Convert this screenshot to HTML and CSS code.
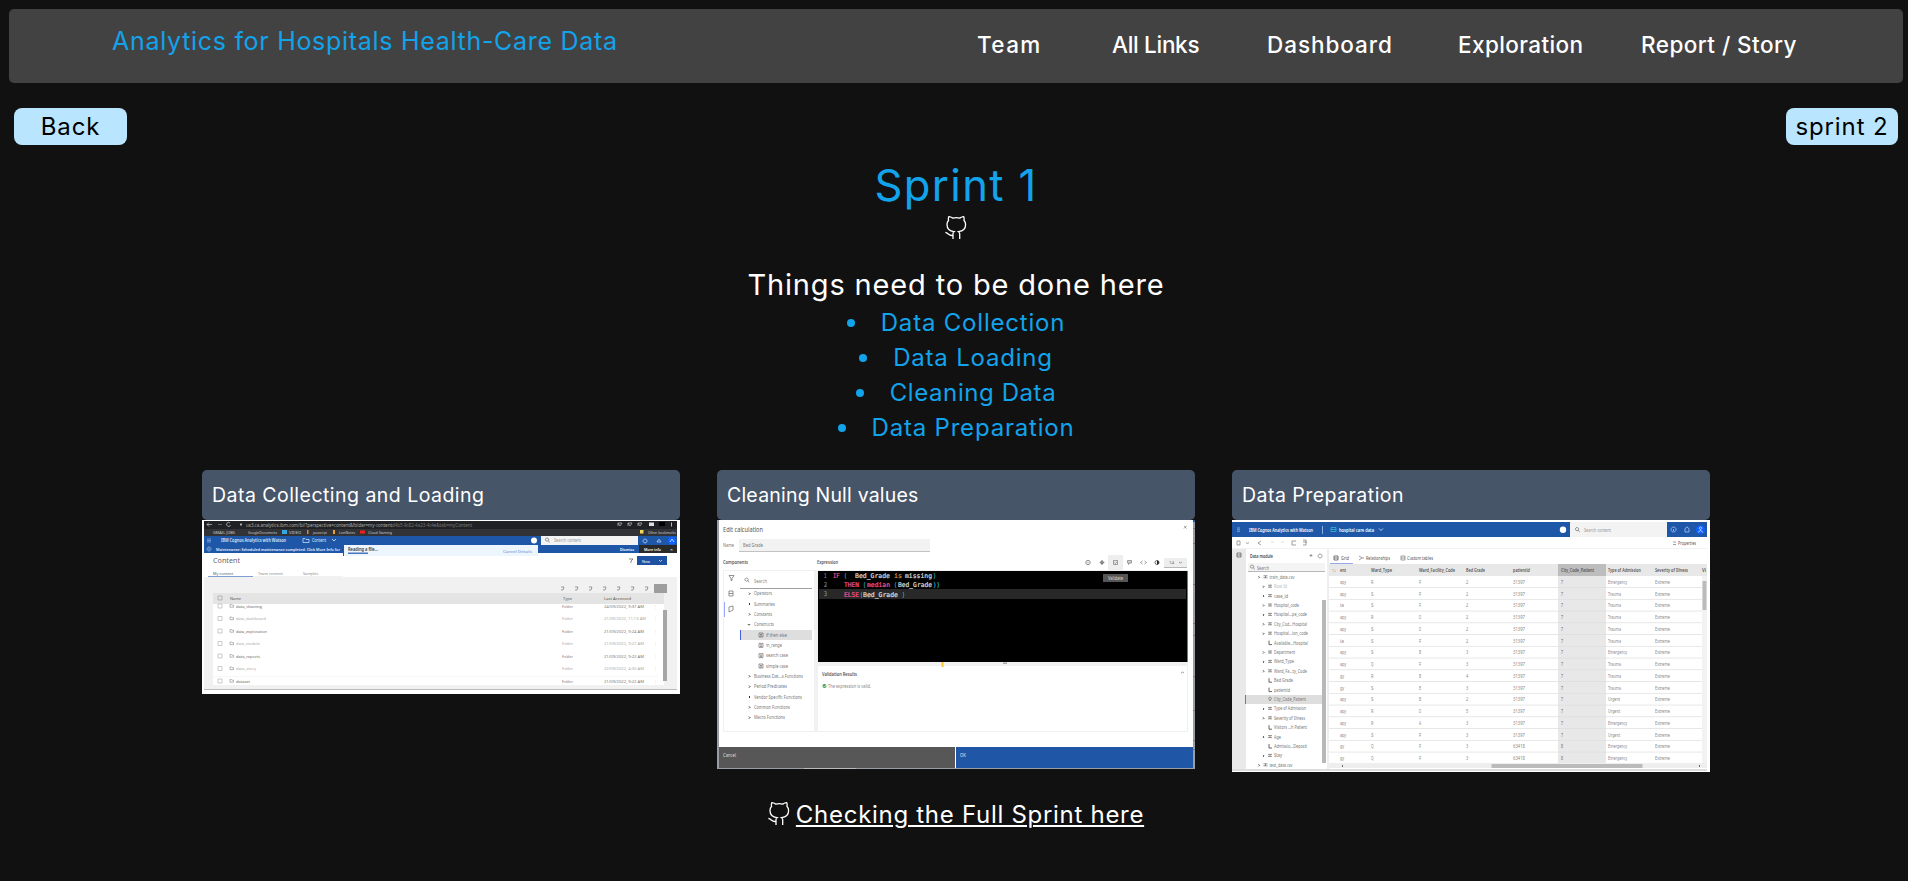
FILE: index.html
```html
<!DOCTYPE html>
<html lang="en">
<head>
<meta charset="utf-8">
<title>Analytics for Hospitals Health-Care Data</title>
<link rel="stylesheet" href="styles.css">
</head>
<body>
<header class="navbar">
  <a class="brand">Analytics for Hospitals Health-Care Data</a>
  <nav class="links"><a class="n1">Team</a><a class="n2">All Links</a><a class="n3">Dashboard</a><a class="n4">Exploration</a><a class="n5">Report / Story</a></nav>
</header>
<div class="pager"><a class="btn back">Back</a><a class="btn next">sprint 2</a></div>
<main>
  <h1><span>Sprint 1</span></h1>
  <svg class="git" viewBox="0 0 22 23"><path d="M8 23V17.8C8 16.8 8.2 16.2 9 15.7C4.9 15.2 2 12.8 2 8.6C2 6.8 2.6 5.3 3.6 4.2C3.2 3 3.3 1.8 3.8.7C5.2.6 6.7 1.4 7.8 2.1C10 1.6 12.5 1.6 14.7 2.1C15.8 1.4 17.3.6 18.7.7C19.2 1.8 19.3 3 18.9 4.2C20 5.3 20.6 6.8 20.6 8.6C20.6 12.8 17.6 15.2 13.6 15.7C14.4 16.2 14.7 16.8 14.7 17.8V23M8 19.4C3.4 20.2 3.5 16.5.4 16.5"/></svg>
  <h2><span>Things need to be done here</span></h2>
  <ul class="todo">
    <li class="t1"><span>Data Collection</span></li>
    <li class="t2"><span>Data Loading</span></li>
    <li class="t3"><span>Cleaning Data</span></li>
    <li class="t4"><span>Data Preparation</span></li>
  </ul>
  <section class="cards">
    <article><h3 class="c1">Data Collecting and Loading</h3><svg id="shot1" class="shot" viewBox="0 0 478 174"></svg></article>
    <article><h3 class="c2">Cleaning Null values</h3><svg id="shot2" class="shot" viewBox="0 0 478 249"></svg></article>
    <article><h3 class="c3">Data Preparation</h3><svg id="shot3" class="shot" viewBox="0 0 478 252"></svg></article>
  </section>
</main>
<footer><svg class="git" viewBox="0 0 22 23"><path d="M8 23V17.8C8 16.8 8.2 16.2 9 15.7C4.9 15.2 2 12.8 2 8.6C2 6.8 2.6 5.3 3.6 4.2C3.2 3 3.3 1.8 3.8.7C5.2.6 6.7 1.4 7.8 2.1C10 1.6 12.5 1.6 14.7 2.1C15.8 1.4 17.3.6 18.7.7C19.2 1.8 19.3 3 18.9 4.2C20 5.3 20.6 6.8 20.6 8.6C20.6 12.8 17.6 15.2 13.6 15.7C14.4 16.2 14.7 16.8 14.7 17.8V23M8 19.4C3.4 20.2 3.5 16.5.4 16.5"/></svg><a class="full">Checking the Full Sprint here</a></footer>
<script src="shots.js"></script>
</body>
</html>
```
FILE: styles.css
```css
* { box-sizing: border-box; margin: 0; padding: 0; }
body { background: #111; color: #fff; font-family: Inter, "Open Sans", sans-serif; height: 881px; overflow: hidden; padding: 9px 5px 0 9px; display: flex; flex-direction: column; }
a, span, h3 { white-space: nowrap; }
.navbar { height: 74px; background: #424242; border-radius: 5px; display: flex; padding-left: 103px; }
.brand { color: #12a3eb; font-size: 25px; line-height: 30px; padding-top: 17px; width: 865px; flex: none; letter-spacing: .7px; }
.links { display: flex; font-size: 22.5px; line-height: 30px; padding-top: 21px; font-weight: 450; }
.n1 { width: 135px; letter-spacing: 1.4px; }
.n2 { width: 155px; letter-spacing: -.3px; }
.n3 { width: 191px; letter-spacing: .95px; }
.n4 { width: 183px; letter-spacing: .4px; }
.n5 { letter-spacing: .45px; }
.pager { display: flex; justify-content: space-between; padding: 25px 5px 0; height: 62px; }
.btn { width: 113px; height: 37px; border-radius: 8px; background: #b9e6fe; color: #000; font-size: 24px; line-height: 37px; text-align: center; letter-spacing: .9px; }
.next { width: 112px; }
main { display: flex; flex-direction: column; align-items: center; }
h1 { color: #12a3eb; font-weight: 400; font-size: 43.5px; line-height: 60px; margin-top: 10px; letter-spacing: 1.4px; }
.git { width: 22px; height: 23px; fill: none; stroke: #fff; stroke-width: 1.3; flex: none; }
main > .git { margin-top: 1px; }
h2 { font-weight: 400; font-size: 29px; line-height: 40px; margin-top: 26px; letter-spacing: .84px; }
.todo { color: #12a3eb; list-style: none; font-size: 24px; line-height: 35px; letter-spacing: .8px; }
.t3 { letter-spacing: .58px; }
.todo li { display: flex; justify-content: center; align-items: center; gap: 26px; }
.todo li::before { content: ""; width: 8px; height: 8px; border-radius: 50%; background: #12a3eb; }
.cards { display: grid; grid-template-columns: repeat(3, 478px); column-gap: 37px; align-items: start; margin-top: 25px; height: 303px; }
article { display: flex; flex-direction: column; }
h3 { height: 50px; background: #475569; border-radius: 5px; font-size: 19.5px; font-weight: 400; line-height: 50px; padding-left: 10px; letter-spacing: .47px; }
.c2 { letter-spacing: .2px; }
.shot { display: block; width: 478px; height: auto; font-family: "Noto Sans", sans-serif; }
footer { display: flex; justify-content: center; align-items: flex-start; gap: 6px; margin-top: 29px; }
.full { font-size: 24px; line-height: 24px; padding-top: 1px; letter-spacing: .71px; text-decoration: underline; text-decoration-thickness: 2px; text-underline-offset: 2px; }
```
FILE: shots.js
```js
const rect = (x, y, w, h, f) => `<rect x="${x}" y="${y}" width="${w}" height="${h}" fill="${f}"/>`;
const label = (x, y, s, w, f = '#777', size = 5, extra = '') =>
  `<text x="${x}" y="${y}" font-size="${size}" fill="${f}" textLength="${w}" lengthAdjust="spacingAndGlyphs" ${extra}>${s}</text>`;
const line = (d, c = '#777', w = 0.7) => `<path d="${d}" fill="none" stroke="${c}" stroke-width="${w}"/>`;
const box = (x, y, s = 4, c = '#999') => line(`M${x} ${y}h${s}v${s}h${-s}z`, c, .6);
const lens = (x, y, c = '#666') => line(`M${x} ${y}a1.6 1.6 0 1 0 .1 0M${x + 1.2} ${y + 2.8}l1.6 1.6`, c);
const bold = 'font-weight="600"';

// Content list in the browser
let a = rect(0, 0, 478, 174, '#fff') + rect(2, 1, 473, 15, '#202124') + rect(2, 9, 473, 7, '#323337') + rect(2, 16, 473, 17, '#1f57a8');
a += line('M10 4.5H5M7 2.5l-2 2 2 2', '#ccc') + line('M16 4.5h4', '#777') + line('M28 3a2 2 0 1 0 .5 2', '#ccc') + rect(38, 3.5, 2, 2, '#aaa');
a += label(44, 6.5, 'us3.ca.analytics.ibm.com/bi/?perspective=content&amp;folder=my-content', 146, '#aaa', 4.5) + label(190, 6.5, 'd4b5-9c82-4a23-4c4e&amp;tab=myContent', 80, '#777', 4.5);
a += label(11, 13.5, 'GMAIL  JOBS', 22, '#ccc', 4) + label(46, 13.5, 'GoogleDocuments', 29, '#ccc', 4) + rect(80, 10, 5, 4, '#35a8e0') + label(87, 13.5, 'VIDEO', 12, '#ccc', 4) + rect(105, 10, 1.5, 4, '#d58a36') + label(111, 13.5, 'javascript', 14, '#ccc', 4) + rect(131, 10, 2, 4, '#e8a336') + label(137, 13.5, 'LeetNotes', 16, '#ccc', 4) + rect(158, 10.5, 5, 3, '#e22') + label(166, 13.5, 'Cloud Gaming', 24, '#ccc', 4) + rect(438, 10, 3.5, 3.5, '#f4d65a') + label(446, 13.5, 'Other bookmarks', 28, '#ccc', 4);
for (const x of [416, 426, 436]) a += line(`M${x} 3l2 3 2-3zm0 0v3`, '#bbb');
a += rect(447, 2.5, 5, 3.5, '#ddd') + rect(457, 2, 6, 4, '#000') + rect(469, 2.5, 1, 4, '#bbb');
a += line('M5 19h4M5 20.5h4M5 22h4', '#8db5ec') + label(19, 22, 'IBM Cognos Analytics with Watson', 65, '#dce8fa', 4.5, bold) + line('M101 18.5h2l1 1h3v3h-6z', '#dce8fa') + label(110, 22, 'Content', 14, '#dce8fa', 4.5) + line('M130 19l2 2 2-2', '#fff');
a += line('M7 27a2 2 0 1 0 .1 0M7 28v2', '#9dc0ed') + label(14, 31, 'Maintenance: Scheduled maintenance completed. Click More Info for', 124, '#e4efff', 4.2, bold);
a += rect(141, 25, 195, 11, '#edf5ff') + rect(141, 25, 1, 11, '#1f57a8') + label(146, 31, 'Reading a file...', 30, '#333', 4.5, bold) + rect(146, 32.5, 20, 1.5, '#4876bd') + label(301, 33, 'Cancel  Details', 29, '#678abd', 4);
a += '<circle cx="332" cy="20.5" r="3" fill="#fff"/>' + rect(339, 16, 97, 9, '#f3f3f3') + lens(345, 18) + label(352, 22, 'Search content', 27, '#999', 4.5) + line('M443 19a2 2 0 1 0 .1 0M455 22q2-5 4 0z', '#cfe2ff') + '<circle cx="470" cy="20.5" r="4" fill="#0f62fe"/>' + line('M468 22l2-3 2 3', '#fff');
a += label(418, 31, 'Dismiss', 14, '#fff', 4, bold) + rect(437, 25, 38, 8, '#292929') + label(442, 31, 'More info', 17, '#fff', 4, bold) + label(468, 31, '×', 3, '#fff', 4);
a += label(11, 43, 'Content', 27, '#666', 6.5) + label(11, 55, 'My content', 20, '#555', 4) + label(56, 55, 'Team content', 25, '#888', 4) + label(101, 55, 'Samples', 15, '#888', 4) + rect(6, 56, 45, .7, '#4775bd') + rect(51, 56, 90, .4, '#ddd');
a += line('M427 39h4l-2 2v2', '#555') + rect(435, 36, 30, 9, '#1d52a2') + label(440, 42.5, 'New', 8, '#fff', 4) + line('M457 40l1.5 1.5 1.5-1.5', '#fff');
a += rect(2, 57, 473, 112, '#f1f1f1') + rect(11, 73, 451, 11, '#e4e4e4') + rect(11, 84, 451, 81, '#fff') + rect(452, 64, 13, 9, '#9d9d9d');
for (let i = 0; i < 7; i++) a += line(`M${359 + i * 14} 67h3l-1 3h-2`, '#777');
a += box(16, 76, 4) + label(28, 80, 'Name', 11, '#555', 4) + label(361, 80, 'Type', 9, '#555', 4) + label(402, 80, 'Last Accessed', 27, '#555', 4);
['data_cleaning', 'data_dashboard', 'data_exploration', 'data_module', 'data_reports', 'data_story', 'dataset'].forEach((s, i) => {
  const y = 87.5 + i * 12.5, c = i % 2 ? '#aaa' : '#777';
  a += box(16, y - 3.5, 4, '#aaa') + line(`M28 ${y - 3}h1.3l.7.7h1.5v2h-3.5z`, '#888', .6) + label(34, y, s, [26, 30, 31, 24, 24, 20, 14][i], i % 2 ? '#aaa' : '#666', 4) + label(360, y, 'Folder', 11, c, 4) + label(402, y, ['24/09/2022, 9:37 AM', '21/09/2022, 11:13 AM', '21/09/2022, 9:24 AM', '21/09/2022, 9:27 AM', '21/09/2022, 9:22 AM', '22/09/2022, 4:30 AM', '21/09/2022, 9:22 AM'][i], i === 1 ? 42 : 40, c, 4) + label(453, y, '⋮', 1, '#666', 4);
});
a += rect(11, 156, 445, .4, '#e7e7e7') + rect(461, 90, 4, 71, '#a6a6a6') + rect(2, 169, 473, 1, '#bbb');
shot1.innerHTML = a;

// Calculation editor
let b = rect(0, 0, 478, 249, '#999da5') + rect(2, 0, 474, 248, '#fff') + label(6, 11.5, 'Edit calculation', 40, '#555', 6.5) + label(6, 27, 'Name', 11, '#777', 4.5) + rect(22, 19, 191, 12, '#f2f2f2') + rect(22, 31, 191, .6, '#999') + label(26, 27, 'Bed Grade', 20, '#777', 4.5) + label(6, 44, 'Components', 25, '#555', 4.5, bold) + label(100, 44, 'Expression', 21, '#555', 4.5, bold);
b += rect(6, 50, 465, 162, '#f1f1f1') + rect(7, 51, 15, 160, '#fff') + rect(22, 51, 75, 160, '#fff') + rect(101, 146, 369, 65, '#fff') + rect(101, 51, 369.5, 91, '#000') + rect(102, 69, 367, 10, '#282828');
b += line('M12 55.5h5l-2 3v2h-1v-2zM12 71h4v5h-4zM12 73.5h4M12 87l4-1v4l-4 2z', '#666') + rect(7, 82, 1, 15, '#9aa7ff') + lens(29.5, 58) + label(37, 62.5, 'Search', 13, '#888', 4.5) + rect(23, 68, 72, .7, '#777');
[['Operators', 18], ['Summaries', 21], ['Constants', 18], ['Constructs', 20], ['if then else', 21], ['in_range', 16], ['search case', 22], ['simple case', 22], ['Business Dat...s Functions', 49], ['Period Predicates', 33], ['Vendor Specific Functions', 48], ['Common Functions', 36], ['Macro Functions', 31]].forEach(([s, w], i) => {
  const y = 75.2 + i * 10.33, sub = i > 3 && i < 8;
  if (i === 4) b += rect(24, y - 6.5, 71, 10, '#dedede') + rect(23, y - 6.5, 1, 10, '#4460d8');
  b += sub ? box(42, y - 3.5, 4, '#555') + line(`M43 ${y - 2}h2m-2 1.5h2`, '#555') : line(i === 3 ? `M31 ${y - 2}l1 1 1-1` : `M32 ${y - 2.5}l1 1-1 1`, '#333', 1);
  b += label(sub ? 49 : 37, y, s, w, '#777', 4.5);
});
const code = (x, y, s, w, f) => label(x, y, s, w, f, 6.5, 'font-family="DejaVu Sans Mono" xml:space="preserve" stroke-width=".2" stroke="' + f + '"');
b += code(107, 58, '1', 2.5, '#888') + code(107, 67, '2', 3, '#888') + code(107, 76, '3', 3, '#888') + code(116, 58, 'IF', 6.5, '#f7538e') + code(127, 58, '(', 3, '#26b8ca') + code(138, 58, 'Bed_Grade', 35, '#ddd') + code(177, 58, 'is', 8, '#d9883c') + code(188, 58, 'missing', 27, '#ddd') + code(216, 58, ')', 3, '#26b8ca');
b += code(127, 67, 'THEN', 15, '#f7538e') + code(146, 67, '(', 3, '#26b8ca') + code(150, 67, 'median', 23, '#f7538e') + code(177, 67, '(', 3, '#26b8ca') + code(181, 67, 'Bed_Grade', 34, '#ddd') + code(216, 67, '))', 7, '#26b8ca') + code(127, 76.5, 'ELSE', 15, '#f7538e') + code(143, 76.5, '(', 3, '#26b8ca') + code(146, 76.5, 'Bed_Grade', 35, '#ddd') + code(185, 76.5, ')', 3, '#26b8ca');
b += rect(391, 35, 15, 15, '#eee') + rect(447, 38, 23, 9, '#eee') + rect(447, 47, 23, .6, '#888');
b += '<circle cx="371" cy="42.5" r="2.2" fill="none" stroke="#666" stroke-width=".7"/>' + line('M371 41.5v2') + '<circle cx="385" cy="42.5" r="1.4" fill="none" stroke="#666" stroke-width=".9"/>' + line('M382.5 42.5h5M385 40v5') + box(396.5, 40.5, 4, '#666') + line('M397.5 42.5l1 1 1.5-2') + line('M410.5 40.5h4v2.5h-2l-1 1.5v-1.5h-1zM411 42h3');
b += line('M425.5 41l-2 1.5 2 1.5m2-3l2 1.5-2 1.5M462 42l1.5 1 1.5-1') + '<circle cx="440" cy="42.5" r="2" fill="#fff" stroke="#333" stroke-width=".7"/><path d="M440 40.5a2 2 0 0 1 0 4" fill="#222"/>' + label(452, 44, '14', 5, '#666', 4) + line('M467 6l2.5 2.5m0-2.5L467 8.5') + rect(386, 54, 25, 8, '#555') + label(391, 60, 'Validate', 15, '#ddd', 4.5);
b += rect(224.5, 142, 2, 5, '#f5c630') + rect(286, 142.5, 4, 1.5, '#aaa') + label(105, 156, 'Validation Results', 35, '#555', 4.5, bold) + '<circle cx="107.5" cy="166" r="2" fill="#3a9e4c"/>' + line('M106.5 166l1 1 1.5-2', '#fff') + label(111, 167.5, 'The expression is valid.', 43, '#888', 4.5) + line('M464 153l1.5-1 1.5 1');
b += rect(2, 227, 236, 21, '#575757') + rect(239, 227, 237, 21, '#1f57a6') + label(6, 236.5, 'Cancel', 13, '#ddd', 4.5) + label(243, 236.5, 'OK', 6, '#dce8ff', 4.5) + rect(476, 0, 2, 2, '#1f57a6') + rect(87, 248, 52, 1, '#bbb');
for (const y of [8, 23, 64, 103, 115, 156, 190, 220, 229]) b += rect(476, y, 2, 1, '#777');
shot2.innerHTML = b;

// Data module grid
let c = rect(0, 0, 478, 252, '#fff') + rect(0, 2, 475, 15, '#1f57a8') + line('M5 8h3M5 9.7h3M5 11.4h3', '#9dbfed') + label(17, 11.5, 'IBM Cognos Analytics with Watson', 64, '#fff', 5, bold) + rect(90, 6, .7, 8, '#bbd4f5') + line('M99 7.5h5v4h-5zM99 9.5h5', '#35c8d7') + label(107, 11.5, 'hospital care data', 35, '#fff', 5, bold) + line('M147 8.5l2 2 2-2', '#fff');
c += '<circle cx="331" cy="9.7" r="3.2" fill="#fff"/>' + rect(338, 2, 97, 15, '#f3f3f3') + lens(345, 7.5) + label(352, 11.5, 'Search content', 27, '#999', 5) + line('M441.5 7a2.5 2.5 0 1 0 .1 0M441.5 9v2M453 12v-3q2-4 4 0v3z', '#b8d6ff') + '<circle cx="468.5" cy="9.7" r="4.5" fill="#0f62fe"/>' + line('M466.3 12.5q2.2-4 4.4 0M468.5 7a1.2 1.2 0 1 0 .1 0', '#fff');
c += line('M5 21h3v4H5zM14 22.5l1.5 1 1.5-1M29 21l-3 2 3 2M64 21h-4v4h4M71 20h3v5h-3M71 22h4') + line('M39 22q2-1 3 1M52 22q-2-1-3 1', '#ccc') + label(446, 24.5, 'Properties', 18, '#555', 4.5) + line('M441 22h3M441 24.5h3');
c += rect(0, 28, 475, .5, '#e5e5e5') + rect(0, 29, 14, 220, '#e9e9e9') + line('M5 33h4v4H5zM5 35h4', '#555') + label(18, 38, 'Data module', 23, '#444', 4.7, bold) + line('M79 34v3m-1.5-1.5h3M88 34a2 2 0 1 0 .1 0') + rect(16, 43, 77, 8, '#f4f4f4') + rect(16, 51, 77, .6, '#888') + lens(20, 45) + label(25, 50, 'Search', 12, '#777', 4.8) + rect(95, 29, 2, 220, '#eee');
[['train_data.csv', 25, 0], ['Row Id', 13, 1], ['case_id', 14, 1], ['Hospital_code', 25, 1], ['Hospital...pe_code', 33, 1], ['City_Cod...Hospital', 33, 1], ['Hospital...ion_code', 34, 1], ['Available...Hospital', 34, 2], ['Department', 21, 1], ['Ward_Type', 20, 1], ['Ward_Fa...ty_Code', 33, 1], ['Bed Grade', 19, 2], ['patientid', 16, 2], ['City_Code_Patient', 32, 3], ['Type of Admission', 32, 1], ['Severity of Illness', 31, 1], ['Visitors ...h Patient', 33, 2], ['Age', 7, 1], ['Admissio...Deposit', 33, 2], ['Stay', 8, 1], ['test_data.csv', 23, 0]].forEach(([s, w, k], i) => {
  const y = 58.8 + i * 9.4, o = k ? 0 : -4.5;
  if (k === 3) c += rect(13, y - 6, 77, 9, '#dedede') + rect(13, y - 6, 1, 9, '#5876e6');
  c += label(42 + o, y, s, w, i === 1 ? '#bbb' : '#777', 4.8) + (k < 2 ? line(`M${31 + o} ${y - 2.5}l1 1-1 1`, '#333', .9) : '');
  c += k === 2 ? line(`M37 ${y - 4}v4h3`, '#555', .9) : k === 3 ? line(`M38 ${y}l-1.5-3 1.5-1 1.5 1z`) : line(`M${36 + o} ${y - 3}h4M${36 + o} ${y - 1}h4M${38 + o} ${y - 3}v2`, '#666');
});
c += rect(90, 80, 4, 163, '#b8b8b8') + line('M102 36h4v4h-4zM102 38h4', '#444') + label(109, 40, 'Grid', 8, '#555', 4.5) + rect(98, 43, 23, .7, '#6b84df') + line('M127 36l3 2-3 2m3-2h2') + label(134, 40, 'Relationships', 24, '#555', 4.5) + line('M169 36h4v4h-4zM169 38h4') + label(175, 40, 'Custom tables', 26, '#555', 4.5);
c += rect(97, 44, 378, 12, '#e8e8e8') + rect(326, 44, 48, 12, '#bdbdbd') + rect(326, 56, 48, 187, '#e8e8e8');
[[100, '↑↓', 4], [108, 'ent', 6], [139, 'Ward_Type', 21], [187, 'Ward_Facility_Code', 36], [234, 'Bed Grade', 19], [281, 'patientid', 17], [329, 'City_Code_Patient', 33], [376, 'Type of Admission', 33], [423, 'Severity of Illness', 33], [470, 'Vi', 4]].forEach(([x, s, w]) => c += label(x, 52, s, w, '#555', 4.7, bold));
const dep = 'apy apy ia apy apy ia apy apy gy gy apy apy apy apy gy gy'.split(' '), wt = 'RSSRSSSQRSSRRSQQ', fac = 'FFFDDFBFBEBDAFFF', bed = '2222223343253333', adm = 'ETTTTTETTTUUEUEE';
for (let i = 0; i < 16; i++) {
  const y = 63.8 + i * 11.75;
  c += label(108, y, dep[i], dep[i].length * 2, '#888', 4.5) + label(139, y, wt[i], 2.5, '#888', 4.5) + label(187, y, fac[i], 2.2, '#888', 4.5) + label(234, y, bed[i], 2.2, '#888', 4.5) + label(281, y, i > 13 ? '63418' : '31397', 12, '#888', 4.5) + label(329, y, i > 13 ? '8' : '7', 2, '#666', 4.5);
  c += label(376, y, { E: 'Emergency', T: 'Trauma', U: 'Urgent' }[adm[i]], { E: 19, T: 13, U: 12 }[adm[i]], '#888', 4.5) + label(423, y, 'Extreme', 15, '#888', 4.5) + rect(97, y + 3.4, 373, .7, '#ddd');
}
c += rect(470, 56, 5, 187, '#f2f2f2') + rect(470.5, 61, 4, 29, '#bbb') + rect(97, 243, 378, 5, '#eee') + rect(259.5, 244, 151, 4, '#bbb') + line('M111 245l-1 1 1 1M467 245l1 1-1 1', '#333') + rect(0, 249.5, 475, 1, '#bbb');
shot3.innerHTML = c;
```
